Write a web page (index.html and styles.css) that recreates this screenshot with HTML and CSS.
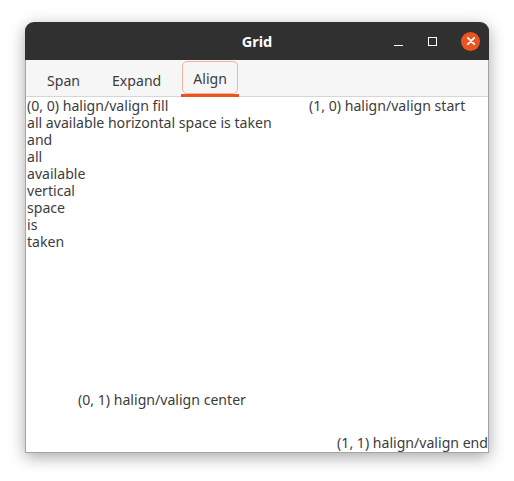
FILE: index.html
```html
<!DOCTYPE html>
<html>
<head>
<meta charset="utf-8">
<link rel="stylesheet" href="styles.css">
</head>
<body>
<div class="window">
  <div class="titlebar">
    <div></div>
    <div class="title">Grid</div>
    <div class="controls">
      <span class="btn-min"></span>
      <span class="btn-max"></span>
      <span class="btn-close">
        <svg width="10" height="10" viewBox="0 0 10 10"><path d="M1.8 1.8 L8.2 8.2 M8.2 1.8 L1.8 8.2" stroke="#fff" stroke-width="1.8" stroke-linecap="round"/></svg>
      </span>
    </div>
  </div>
  <div class="tabs">
    <div class="tab"><span class="tab-label">Span</span></div>
    <div class="tab"><span class="tab-label">Expand</span></div>
    <div class="tab active"><span class="tab-label">Align</span><span class="tab-bar"></span></div>
  </div>
  <div class="content">
    <div class="cell fill">(0, 0) halign/valign fill<br>all available horizontal space is taken<br>and<br>all<br>available<br>vertical<br>space<br>is<br>taken</div>
    <div class="cell start">(1, 0) halign/valign start</div>
    <div class="cell center">(0, 1) halign/valign center</div>
    <div class="cell end">(1, 1) halign/valign end</div>
  </div>
</div>
</body>
</html>
```
FILE: styles.css
```css
html, body {
  margin: 0;
  padding: 0;
  background: #ffffff;
}
body {
  font-family: "Noto Sans", sans-serif;
  color: #3c3c3c;
  padding: 22px 0 28px 25px;
}
.window {
  width: 464px;
  height: 431px;
  box-sizing: border-box;
  display: flex;
  flex-direction: column;
  border-radius: 9px 9px 0 0;
  border: 1px solid #a4a4a4;
  border-top: none;
  box-shadow: 0 4px 16px rgba(0,0,0,0.35);
  background: #ffffff;
}
.titlebar {
  height: 38px;
  flex: none;
  margin: 0 -1px;
  background: #303030;
  border-radius: 9px 9px 0 0;
  display: grid;
  grid-template-columns: 1fr auto 1fr;
  align-items: center;
}
.title {
  color: #ffffff;
  font-weight: bold;
  font-size: 14.5px;
}
.controls {
  display: flex;
  justify-content: flex-end;
  align-items: center;
  padding-right: 9px;
}
.btn-min {
  width: 9px;
  height: 1px;
  background: #ffffff;
  margin-top: 8px;
  margin-right: 25px;
}
.btn-max {
  width: 7px;
  height: 7px;
  border: 1px solid #ffffff;
  margin-right: 24px;
}
.btn-close {
  width: 19px;
  height: 19px;
  border-radius: 50%;
  background: #e95420;
  display: flex;
  align-items: center;
  justify-content: center;
}
.tabs {
  height: 36px;
  flex: none;
  background: #f6f6f6;
  border-bottom: 1px solid #d6d6d6;
  display: flex;
  align-items: flex-end;
  padding-left: 10px;
  gap: 10px;
}
.tab {
  display: flex;
  flex-direction: column;
  align-items: stretch;
}
.tab-label {
  height: 33px;
  box-sizing: border-box;
  padding: 1px 10px 0;
  display: flex;
  align-items: center;
  font-size: 14.1px;
  color: #3c3c3c;
  border: 1px solid transparent;
  border-radius: 5px;
}
.tab.active {
  margin-bottom: -1px;
}
.tab.active .tab-label {
  border-color: #f4b49b;
}
.tab-bar {
  height: 3px;
  background: #e95420;
  margin: 0 -1px;
}
.content {
  flex: 1;
  display: grid;
  grid-template-columns: 270px 1fr;
  grid-template-rows: 250px 1fr;
  column-gap: 12px;
  padding-left: 1px;
  font-size: 14.1px;
  line-height: 17px;
}
.cell.fill {
  justify-self: stretch;
  align-self: stretch;
}
.cell.start {
  justify-self: start;
  align-self: start;
}
.cell.center {
  justify-self: center;
  align-self: center;
}
.cell.end {
  justify-self: end;
  align-self: end;
  margin-bottom: 1px;
}
```
